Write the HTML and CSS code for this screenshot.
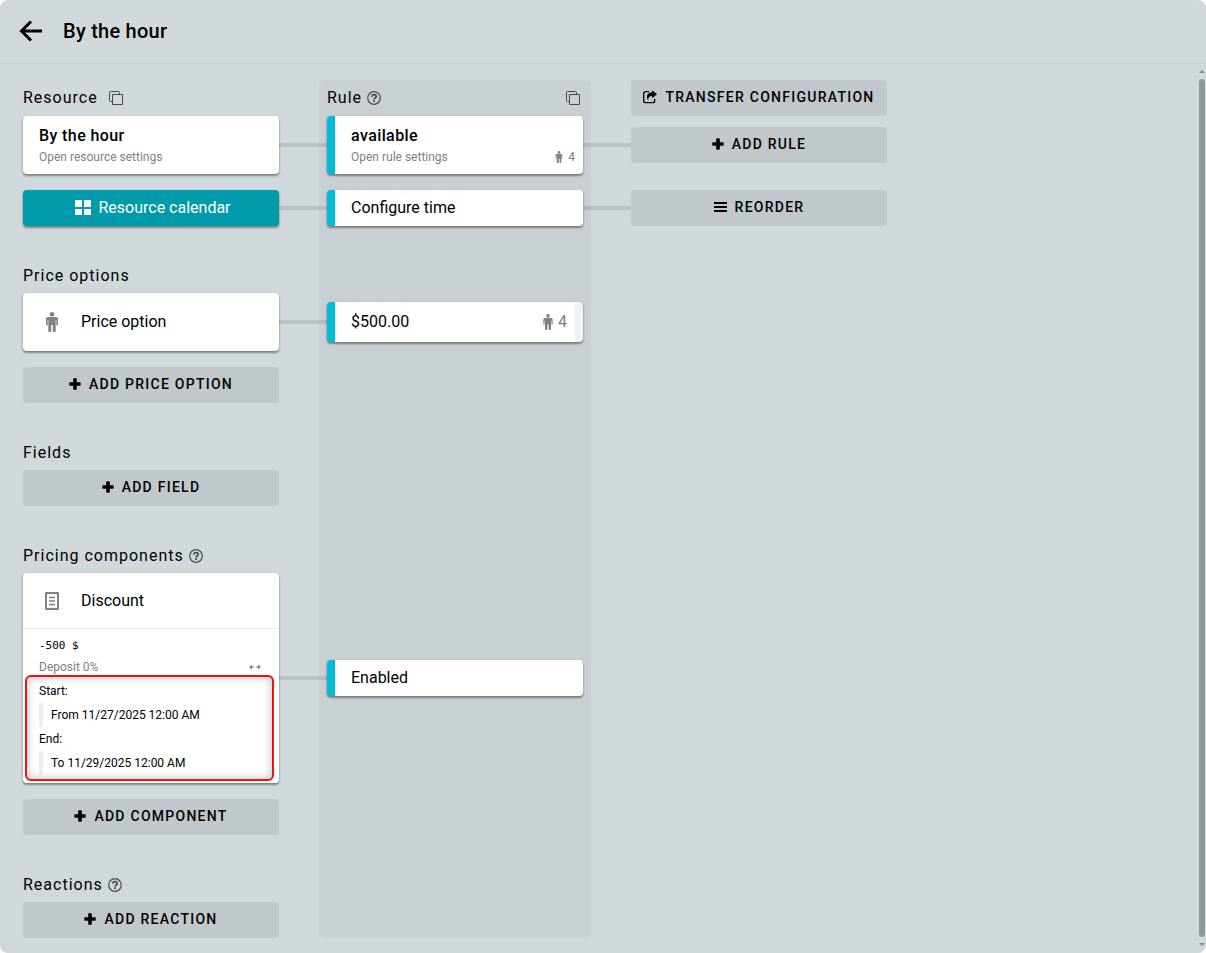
FILE: index.html
```html
<!DOCTYPE html>
<html lang="en">

<head>
    <meta charset="UTF-8">
    <meta name="viewport" content="width=device-width, initial-scale=1.0">
    <title>By the hour</title>
    <link rel="stylesheet" href="styles.css">
</head>

<body>
    <!-- Shared icons -->
    <svg class="sprite" aria-hidden="true">
        <symbol id="copy" viewBox="0 0 16 16">
            <path d="M4.5 4.5h10v10h-10zM4.5 11.5h-2a1 1 0 0 1-1-1v-8a1 1 0 0 1 1-1h8a1 1 0 0 1 1 1v2" fill="none" stroke="currentColor" />
        </symbol>
        <symbol id="help" viewBox="0 0 14 14">
            <circle cx="7" cy="7" r="6.3" fill="none" stroke="currentColor" stroke-width="1.2" />
            <path d="M4.9 5.6C5 4.2 5.9 3.6 7 3.6s2.2.7 2.2 1.9c0 1.5-2.1 1.5-2.1 2.9" fill="none" stroke="currentColor" stroke-width="1.7" />
            <path d="M6.2 9.2h1.8v1.7H6.2z" fill="currentColor" />
        </symbol>
        <symbol id="person" viewBox="0 0 12 20">
            <circle cx="6" cy="2.3" r="2.3" fill="currentColor" />
            <path d="M2 5h8a2 2 0 0 1 2 2v5.5a.8.8 0 0 1-1.700 0V8h-.6v11a1 1 0 0 1-1 1h-.9a1 1 0 0 1-1-1v-6h-1.600v6a1 1 0 0 1-1 1h-.9a1 1 0 0 1-1-1V8h-.6v4.500a.8.8 0 0 1-1.700 0V7a2 2 0 0 1 2-2z" fill="currentColor" />
        </symbol>
        <symbol id="plus" viewBox="0 0 12 12">
            <path d="M4.200 1a.7.7 0 0 1 .7-.7h2.200a.7.7 0 0 1 .7.7v3.200H11a.7.7 0 0 1 .7.7v2.200a.7.7 0 0 1-.7.7H7.800V11a.7.7 0 0 1-.7.7H4.900a.7.7 0 0 1-.7-.7V7.800H1a.7.7 0 0 1-.7-.7V4.900a.7.7 0 0 1 .7-.7h3.200z" fill="currentColor" />
        </symbol>
    </svg>

    <div class="page">
        <header class="topbar">
            <button class="icon-button" aria-label="Back">
                <svg width="24" height="24" viewBox="0 0 24 24"><path d="M23 12H3M12 2.5L2.5 12l9.500 9.500" fill="none" stroke="currentColor" stroke-width="3" /></svg>
            </button>
            <h1>By the hour</h1>
        </header>

        <div class="content">
            <main class="board">
                <div class="rule-column"></div>

                <div class="rows">
                    <!-- Resource and rule -->
                    <section>
                        <div class="row">
                            <h2>Resource
                                <button class="icon-button copy" aria-label="Copy resource"><svg width="16" height="16"><use href="#copy" /></svg></button>
                            </h2>
                            <h2 class="rule">Rule <svg class="help" width="14" height="14"><use href="#help" /></svg>
                                <button class="icon-button end" aria-label="Copy rule"><svg width="16" height="16"><use href="#copy" /></svg></button>
                            </h2>
                            <button class="add last">
                                <svg width="14" height="14" viewBox="0 0 14 14"><path d="M6 1.700H2.700a2 2 0 0 0-2 2v7a2 2 0 0 0 2 2h7a2 2 0 0 0 2-2V9" fill="none" stroke="currentColor" stroke-width="1.300" /><path d="M9.200.2L14 4.200 9.200 8.200V6C6.500 5.900 5 7.200 5.200 10.500 2.500 6.500 4.500 2.300 9.200 2.300z" fill="currentColor" /></svg>
                                TRANSFER CONFIGURATION
                            </button>
                        </div>
                        <div class="row">
                            <a class="card" href="#">
                                <strong>By the hour</strong>
                                <small>Open resource settings</small>
                            </a>
                            <span class="line"></span>
                            <a class="card marked" href="#">
                                <strong>available</strong>
                                <small>Open rule settings <span class="count"><svg width="8" height="12" viewBox="0 0 12 20"><use href="#person" /></svg>4</span></small>
                            </a>
                            <span class="line"></span>
                            <button class="add"><svg width="12" height="12"><use href="#plus" /></svg>ADD RULE</button>
                        </div>
                        <div class="row spaced">
                            <button class="calendar">
                                <svg width="16" height="16" viewBox="0 0 16 16"><path d="M0 0h7v7H0zM9 0h7v7H9zM0 9h7v6H0zM9 9h7v6H9z" fill="currentColor" /></svg>
                                Resource calendar
                            </button>
                            <span class="line"></span>
                            <button class="card marked single">Configure time</button>
                            <span class="line"></span>
                            <button class="add">
                                <svg width="13" height="12" viewBox="0 0 13 12"><path d="M0 2h13M0 6h13M0 10h13" stroke="currentColor" stroke-width="2" /></svg>
                                REORDER
                            </button>
                        </div>
                    </section>

                    <!-- Price options -->
                    <section>
                        <div class="row"><h2>Price options</h2></div>
                        <div class="row">
                            <a class="card option" href="#"><svg class="lead" width="26" height="20" viewBox="0 0 12 20"><use href="#person" /></svg>Price option</a>
                            <span class="line"></span>
                            <button class="card marked single price">$500.00
                                <span class="count"><svg width="10" height="16" viewBox="0 0 12 20"><use href="#person" /></svg>4</span>
                            </button>
                        </div>
                        <div class="row spaced">
                            <button class="add"><svg width="12" height="12"><use href="#plus" /></svg>ADD PRICE OPTION</button>
                        </div>
                    </section>

                    <!-- Fields -->
                    <section>
                        <div class="row"><h2>Fields</h2></div>
                        <div class="row">
                            <button class="add"><svg width="12" height="12"><use href="#plus" /></svg>ADD FIELD</button>
                        </div>
                    </section>

                    <!-- Pricing components -->
                    <section>
                        <div class="row"><h2>Pricing components <svg class="help" width="14" height="14"><use href="#help" /></svg></h2></div>
                        <div class="row">
                            <article class="card component">
                                <h3>
                                    <svg class="lead" width="26" height="18" viewBox="0 0 14 18"><path d="M1 1h12v16H1z" fill="none" stroke="currentColor" stroke-width="2" stroke-linejoin="round" /><path d="M4 5.500h6M4 9h6M4 12.500h6" stroke="currentColor" stroke-width="1.500" /></svg>
                                    Discount
                                </h3>
                                <div class="details">
                                    <code>-500 $</code>
                                    <div class="deposit">Deposit 0%
                                        <svg width="12" height="6" viewBox="0 0 12 6"><path d="M1 3h4M7 3h4" stroke="currentColor" /><path d="M3 .8v4.400L0 3zM9 .8v4.400L12 3z" fill="currentColor" /></svg>
                                    </div>
                                    <dl class="dates">
                                        <dt>Start:</dt>
                                        <dd>From 11/27/2025 12:00 AM</dd>
                                        <dt>End:</dt>
                                        <dd>To 11/29/2025 12:00 AM</dd>
                                    </dl>
                                </div>
                            </article>
                            <span class="line"></span>
                            <button class="card marked single">Enabled</button>
                        </div>
                        <div class="row spaced">
                            <button class="add"><svg width="12" height="12"><use href="#plus" /></svg>ADD COMPONENT</button>
                        </div>
                    </section>

                    <!-- Reactions -->
                    <section>
                        <div class="row"><h2>Reactions <svg class="help" width="14" height="14"><use href="#help" /></svg></h2></div>
                        <div class="row">
                            <button class="add"><svg width="12" height="12"><use href="#plus" /></svg>ADD REACTION</button>
                        </div>
                    </section>
                </div>
            </main>

            <div class="scrollbar" aria-hidden="true">
                <svg width="6" height="3" viewBox="0 0 6 3"><path d="M3 0l3 3H0z" fill="currentColor" /></svg>
                <span></span>
                <svg width="6" height="3" viewBox="0 0 6 3"><path d="M0 0h6L3 3z" fill="currentColor" /></svg>
            </div>
        </div>
    </div>
</body>

</html>
```
FILE: styles.css
```css
* {
    box-sizing: border-box;
}

body {
    margin: 0;
    background: #ffffff;
    color: #000000;
    font-family: Roboto, "Liberation Sans", sans-serif;
    font-size: 16px;
    line-height: 24px;
}

h1,
h2,
h3,
dl,
dd {
    margin: 0;
}

button {
    font: inherit;
    color: inherit;
    border: none;
    cursor: pointer;
}

svg {
    display: block;
    flex: none;
}

.sprite {
    display: none;
}

.page {
    display: flex;
    flex-direction: column;
    min-height: 100vh;
    background: #d0d8db;
    border-radius: 8px;
}

.topbar {
    display: flex;
    align-items: center;
    gap: 20px;
    height: 64px;
    padding: 0 19px 2px;
    border-bottom: 1px solid #c6ced1;
}

h1 {
    font-size: 20px;
    font-weight: 500;
    letter-spacing: 0.0125em;
}

.icon-button {
    padding: 0;
    background: none;
}

.content {
    display: flex;
    flex: 1;
    justify-content: space-between;
}

/* The rule column lies behind the rows, in the same grid cell */
.board {
    display: grid;
    padding: 16px 23px 15px;
}

.rule-column,
.rows {
    grid-area: 1 / 1;
}

.rule-column {
    width: 272px;
    margin-left: 296px;
    background: #c9d0d3;
    border-radius: 5px;
}

.rows {
    display: flex;
    flex-direction: column;
    gap: 31px;
}

.row {
    display: grid;
    grid-template-columns: 256px 48px 256px 48px 256px;
    align-items: center;
}

.spaced {
    margin-top: 16px;
}

.line {
    height: 4px;
    background: rgba(0, 0, 0, 0.1);
}

h2 {
    display: flex;
    align-items: center;
    height: 36px;
    font-size: 16px;
    font-weight: 400;
    letter-spacing: 1px;
    white-space: nowrap;
}

section + section h2 {
    padding-top: 2px;
}

.copy {
    margin-left: 10px;
}

.help {
    margin-left: 5px;
}

.rule {
    grid-column: 3;
}

.end {
    margin-left: auto;
    margin-right: 2px;
}

h2 svg {
    color: #444a4d;
}

.last {
    grid-column: 5;
}

/* Buttons */
.add,
.calendar {
    display: flex;
    align-items: center;
    justify-content: center;
    height: 36px;
    padding: 0;
    border-radius: 4px;
    white-space: nowrap;
}

.add {
    gap: 8px;
    padding-bottom: 2px;
    background: #c0c8cb;
    font-size: 14px;
    font-weight: 500;
    letter-spacing: 0.09em;
}

.calendar,
.card {
    box-shadow: 0 2px 2px rgba(0, 0, 0, 0.3), 0 1px 3px rgba(0, 0, 0, 0.2);
}

.calendar {
    gap: 7px;
    padding-left: 4px;
    background: #009bab;
    color: #ffffff;
}

/* Cards */
.card {
    display: block;
    padding: 8px 16px;
    background: #ffffff;
    border-radius: 4px;
    color: #000000;
    text-align: left;
    text-decoration: none;
}

.marked {
    padding-right: 8px;
    border-left: 8px solid #00bcd7;
}

.card strong {
    display: block;
    font-weight: 500;
    letter-spacing: 0.025em;
}

.card small {
    display: flex;
    justify-content: space-between;
    font-size: 12px;
    line-height: 18px;
    color: #808080;
}

.count {
    display: flex;
    align-items: center;
    gap: 5px;
    color: #808080;
}

.single {
    display: flex;
    align-items: center;
    justify-content: space-between;
    height: 36px;
}

.price {
    height: 40px;
    border-right: 8px solid #f2f2f2;
}

.option,
h3 {
    display: flex;
    align-items: center;
    gap: 16px;
}

.option {
    height: 58px;
}

.lead {
    color: #808080;
}

.component {
    padding: 0;
}

h3 {
    height: 56px;
    padding: 0 16px;
    border-bottom: 1px solid #eeeeee;
    font-size: 16px;
    font-weight: 400;
}

.details {
    padding: 8px 16px;
    font-size: 12px;
}

code {
    display: block;
    font-family: "DejaVu Sans Mono", monospace;
    font-size: 11px;
    line-height: 18px;
}

.deposit {
    display: flex;
    align-items: center;
    justify-content: space-between;
    padding-right: 2px;
    color: #808080;
}

.dates {
    position: relative;
}

.dates dd {
    padding-left: 8px;
    border-left: 4px solid #eeeeee;
}

/* Highlight frame around the dates */
.dates::after {
    content: "";
    position: absolute;
    inset: -4px -11px -6px -14px;
    border: 2px solid #f01010;
    border-radius: 6px;
    box-shadow: inset 0 0 10px rgba(0, 0, 0, 0.25);
}

/* Scrollbar */
.scrollbar {
    display: flex;
    flex-direction: column;
    align-items: center;
    gap: 6px;
    padding: 6px 1px 7px;
    color: #848b8e;
}

.scrollbar span {
    flex: 1;
    width: 6px;
    background: #8f979a;
    border-radius: 3px;
}
```
